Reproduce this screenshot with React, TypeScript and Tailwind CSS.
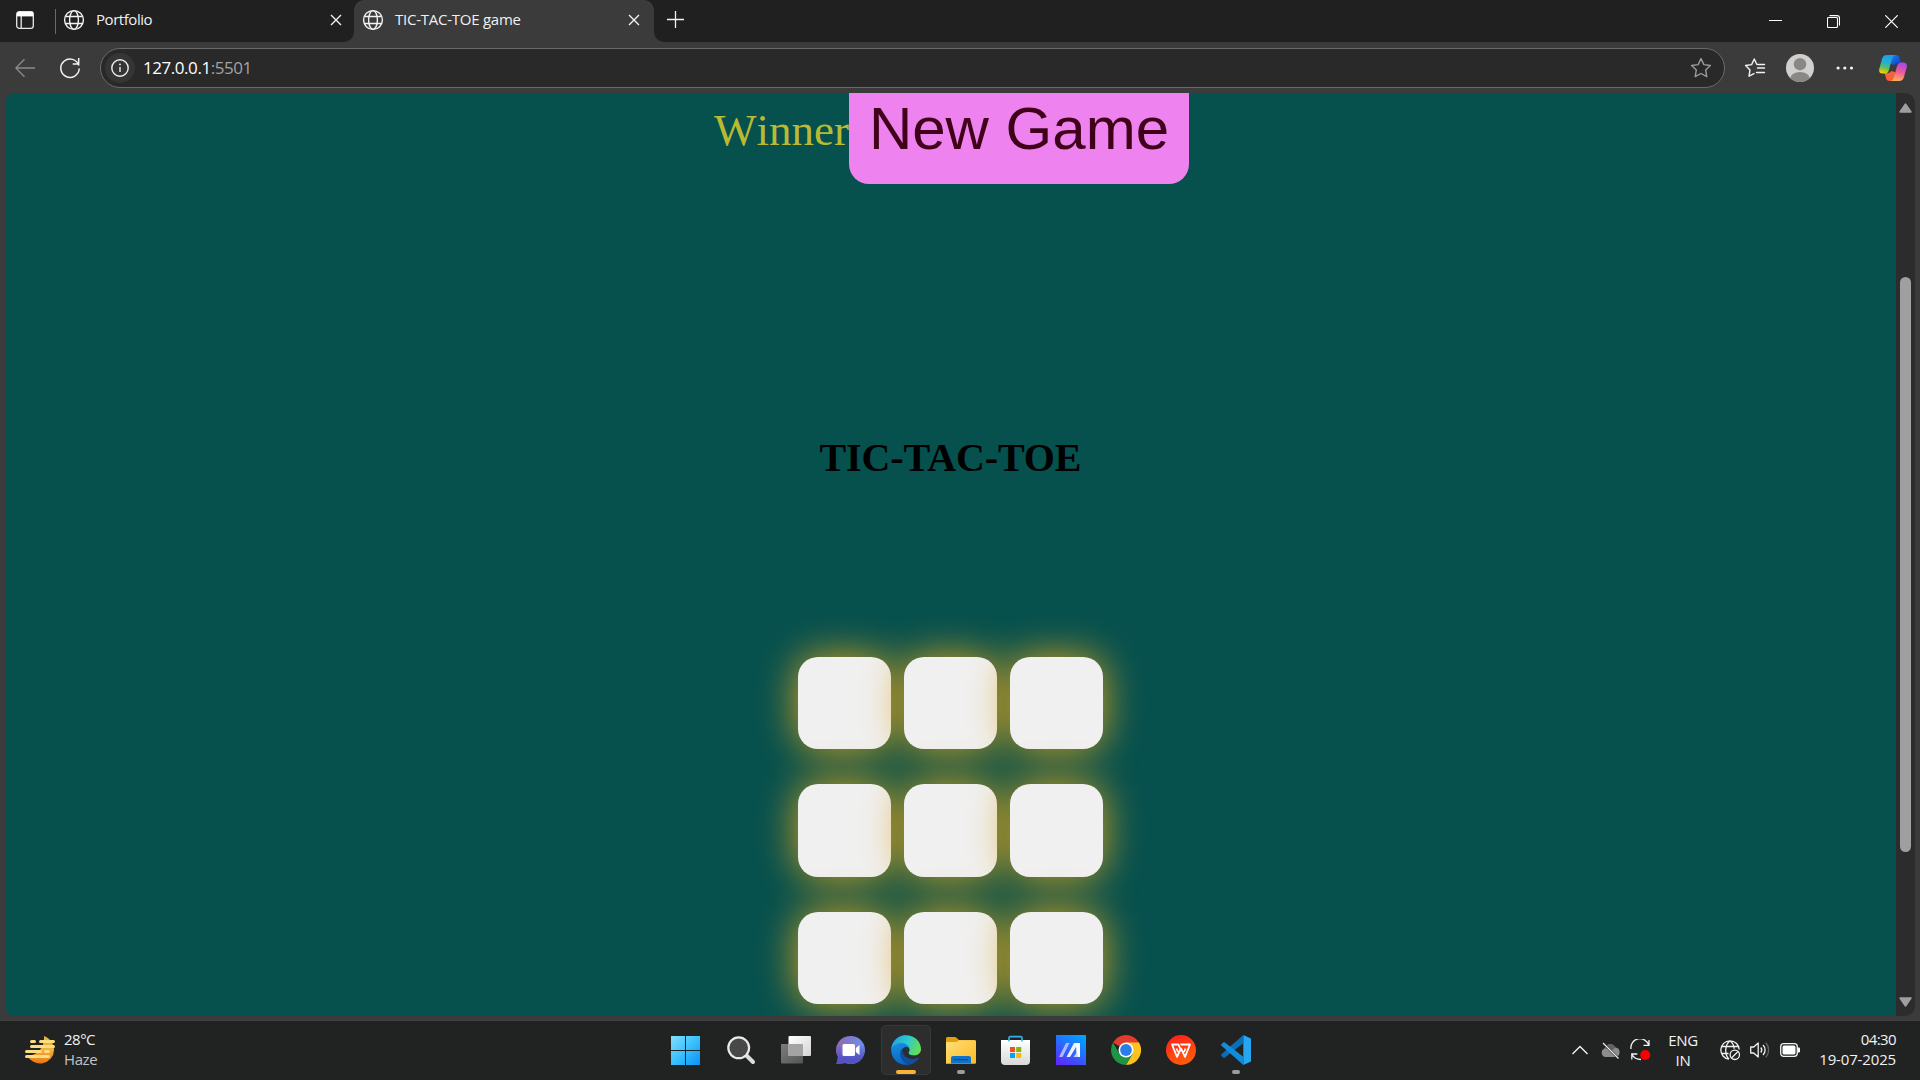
import React from "react";

const Globe = () => (
  <svg width="22" height="22" viewBox="0 0 22 22" fill="none" stroke="#f2f2f2" strokeWidth="1.4">
    <circle cx="11" cy="11" r="9.4" />
    <ellipse cx="11" cy="11" rx="4.4" ry="9.4" />
    <path d="M2.6 7.5h16.8M2.6 14.5h16.8" />
  </svg>
);

const Cross = () => (
  <svg width="12" height="12" viewBox="0 0 12 12" stroke="#f2f2f2" strokeWidth="1.4">
    <path d="M1 1l10 10M11 1L1 11" />
  </svg>
);

function TabStrip() {
  return (
    <div className="flex h-[42px] items-start bg-[#202020]">
      <div className="flex h-10 w-[55px] items-center pl-4">
        <svg width="18" height="18" viewBox="0 0 18 18" fill="none" stroke="#e8e8e8" strokeWidth="1.3">
          <rect x=".7" y=".7" width="16.6" height="16.6" rx="2.6" />
          <path d="M5.2 5v12" />
          <path d="M1 1h16v4.4H1z" fill="#fff" stroke="none" />
        </svg>
      </div>
      <div className="mt-[9px] h-[25px] w-px bg-[#6a6a6a]" />
      <div className="flex h-10 w-[298px] items-center pl-[7px]">
        <Globe />
        <span className="mb-[2px] ml-[11px] w-[234px] text-[15px] tracking-[-0.45px] text-[#f0f0f0]">Portfolio</span>
        <Cross />
      </div>
      <div className="relative flex h-[42px] w-[300px] items-start rounded-t-[10px] bg-[#3b3b3b]">
        <svg className="absolute bottom-0 -left-[10px]" width="10" height="10"><path d="M10 0v10H0A10 10 0 0 0 10 0" fill="#3b3b3b" /></svg>
        <svg className="absolute -right-[10px] bottom-0" width="10" height="10"><path d="M0 0v10h10A10 10 0 0 1 0 0" fill="#3b3b3b" /></svg>
        <div className="flex h-10 items-center pl-[8px]">
          <Globe />
          <span className="mb-[2px] ml-[11px] w-[233px] text-[15px] tracking-[-0.25px] text-[#f0f0f0]">TIC-TAC-TOE game</span>
          <Cross />
        </div>
      </div>
      <svg className="mt-[11px] ml-[13px]" width="18" height="18" viewBox="0 0 18 18" stroke="#f2f2f2" strokeWidth="1.3">
        <path d="M8.5 0v17M0 8.5h17" />
      </svg>
      <div className="mt-[15px] mr-[22px] ml-auto flex items-start gap-[45px]">
        <svg width="13" height="13"><path d="M0 5.5h13" stroke="#fff" /></svg>
        <svg width="13" height="13" viewBox="0 0 13 13" fill="none" stroke="#fff" strokeWidth="1.1">
          <rect x=".5" y="2.5" width="10" height="10" rx="1" />
          <path d="M2.5 .6h7.5a2.5 2.5 0 0 1 2.5 2.5v7.4" />
        </svg>
        <svg width="13" height="13" viewBox="0 0 13 13" stroke="#fff" strokeWidth="1.2"><path d="M.3 .3l12.4 12.4M12.7 .3L.3 12.7" /></svg>
      </div>
    </div>
  );
}

function Toolbar() {
  return (
    <div className="flex h-[51px] items-center bg-[#3b3b3b]">
      <svg className="ml-[15px]" width="20" height="20" viewBox="0 0 20 20" fill="none" stroke="#8c8c8c" strokeWidth="1.3">
        <path d="M20 10H1M9.5 1.2L.8 10l8.7 8.8" />
      </svg>
      <svg className="ml-[25px]" width="20" height="22" viewBox="0 0 20 22" fill="none" stroke="#f2f2f2" strokeWidth="1.5">
        <path d="M18.8 8.5A9.2 9.2 0 1 0 19.2 11.5M18.7 1v6h-6" />
      </svg>
      <div className="mt-[1px] ml-[20px] flex h-10 w-[1625px] items-center rounded-full border border-[#6b6b6b] bg-[#292929]">
        <div className="ml-[4px] flex size-[30px] items-center justify-center rounded-full bg-[#353535]">
          <svg width="18" height="18" viewBox="0 0 18 18" fill="none" stroke="#eee" strokeWidth="1.4">
            <circle cx="9" cy="9" r="8.2" />
            <path d="M9 8v5" />
            <circle cx="9" cy="5.4" r=".9" fill="#eee" stroke="none" />
          </svg>
        </div>
        <span className="mb-px ml-[8px] text-[17px] tracking-[-0.45px] text-white">127.0.0.1<span className="text-[#a2a2a2]">:5501</span></span>
        <svg className="mr-[12px] ml-auto" width="22" height="22" viewBox="0 0 22 22" fill="none" stroke="#9b9b9b" strokeWidth="1.4" strokeLinejoin="round">
          <path d="M11 1.6l2.9 6 6.5.9-4.7 4.6 1.1 6.5-5.8-3.1-5.8 3.1 1.1-6.5L1.6 8.5l6.5-.9z" />
        </svg>
      </div>
      <svg className="ml-[19px]" width="22" height="22" viewBox="0 0 22 22" fill="none" stroke="#f2f2f2" strokeWidth="1.4" strokeLinejoin="round" strokeLinecap="round">
        <path d="M14.5 7.5l-1.8-.3L10.3 2 7.6 7.6l-6 .9 4.4 4.4-1 6.3 5-2.5M13.5 11h7M13.5 7.5h7M12.5 15.5h8" />
      </svg>
      <svg className="ml-[20px]" width="28" height="28" viewBox="0 0 28 28">
        <defs><clipPath id="av"><circle cx="14" cy="14" r="14" /></clipPath></defs>
        <g clipPath="url(#av)">
          <rect width="28" height="28" fill="#d2d0ce" />
          <circle cx="14" cy="10.2" r="6.2" fill="#8a8886" />
          <ellipse cx="14" cy="25" rx="10" ry="7" fill="#8a8886" />
        </g>
      </svg>
      <svg className="ml-[22px]" width="18" height="6" viewBox="0 0 18 6" fill="#f2f2f2">
        <circle cx="2.1" cy="3" r="1.6" /><circle cx="8.8" cy="3" r="1.6" /><circle cx="15.5" cy="3" r="1.6" />
      </svg>
      <svg className="ml-[25px]" width="28" height="26" viewBox="0 0 28 26">
        <defs>
          <linearGradient id="cpa" x1=".5" y1="0" x2=".3" y2="1"><stop stopColor="#1d9bf0" /><stop offset=".45" stopColor="#27b3c6" /><stop offset=".72" stopColor="#6fc04d" /><stop offset="1" stopColor="#ffd400" /></linearGradient>
          <linearGradient id="cpb" x1=".6" y1="0" x2=".4" y2="1"><stop stopColor="#a248f0" /><stop offset=".5" stopColor="#ee5a98" /><stop offset="1" stopColor="#ffb05c" /></linearGradient>
          <linearGradient id="cpc" x1="0" y1="0" x2="1" y2="1"><stop stopColor="#1487f0" /><stop offset="1" stopColor="#1734c4" /></linearGradient>
        </defs>
        <path d="M12 0h5c2 0 3 1.200 3.500 3l1.500 5h-3.500c-1.500 0-2.500.7-3 2L12 9z" fill="url(#cpc)" />
        <path d="M16 26h-5.500c-2 0-3-1.200-3.500-3L5.500 18H9c1.500 0 2.500-.7 3-2l4 1z" fill="#f4623a" />
        <path d="M8 0h8.500c-1.800.3-2.800 1.600-3.400 3.600L10 14.800c-.7 2.500-1.800 3.800-4.200 3.800H3.600C.6 18.600-.4 16.500.3 13.700L3 4C3.800 1.300 5 0 8 0z" fill="url(#cpa)" />
        <path d="M20 26h-8.500c1.800-.3 2.800-1.600 3.400-3.600L18 11.200c.7-2.500 1.800-3.800 4.200-3.800h2.200c3 0 4 2.100 3.300 4.900L25 22c-.8 2.700-2 4-5 4z" fill="url(#cpb)" />
      </svg>
    </div>
  );
}

const cells = Array.from({ length: 9 }, (_, i) => i);

function GamePage() {
  return (
    <main className="relative flex h-[923px] flex-1 flex-col items-center overflow-hidden bg-[#06504e]">
      <div className="flex h-[91px] items-start pl-0.5">
        <p className="mt-[11px] font-['Liberation_Serif',serif] text-[45px] leading-[52px] text-[#baba32] [font-kerning:none]">Winner</p>
        <button className="h-[91px] rounded-b-[20px] bg-[#ee82ee] px-5 pb-[19px] font-['Liberation_Sans',sans-serif] text-[60px] leading-[72px] whitespace-nowrap text-[#40001a]">New Game</button>
      </div>
      <h1 className="mt-[251px] font-['Liberation_Serif',serif] text-[40px] leading-[46px] font-bold tracking-[-0.1px] text-black">TIC-TAC-TOE</h1>
      <div className="mt-[175.6px] grid grid-cols-[93px_93px_93px] gap-x-[13px] gap-y-[35px] pr-px">
        {cells.map((c) => (
          <div key={c} className="h-[92.5px] rounded-[20px] bg-[#f0f0f0] shadow-[0_0_40px_#daa520]" />
        ))}
      </div>
    </main>
  );
}

function Scrollbar() {
  return (
    <div className="flex w-[19px] flex-col items-center bg-[#2c2c2c]">
      <svg className="mt-[10px]" width="13" height="10" viewBox="0 0 13 10"><path d="M6.500 1L12 9H1z" fill="#9f9f9f" stroke="#9f9f9f" strokeWidth="1.500" strokeLinejoin="round" /></svg>
      <div className="mt-[164px] h-[575px] w-[11px] rounded-full bg-[#9f9f9f]" />
      <svg className="mt-auto mb-[9px]" width="13" height="10" viewBox="0 0 13 10"><path d="M6.500 9L12 1H1z" fill="#9f9f9f" stroke="#9f9f9f" strokeWidth="1.500" strokeLinejoin="round" /></svg>
    </div>
  );
}

const Art = ({ children }: { children: React.ReactNode }) => (
  <svg width="30" height="30" viewBox="0 0 30 30">{children}</svg>
);

const icons: { id: string; active?: boolean; running?: boolean; art: React.ReactNode }[] = [
  {
    id: "start",
    art: (
      <Art>
        <defs><linearGradient id="win" x1="0" y1="0" x2="29" y2="29" gradientUnits="userSpaceOnUse"><stop stopColor="#86e0ff" /><stop offset=".5" stopColor="#3cc2fc" /><stop offset="1" stopColor="#0a93f8" /></linearGradient></defs>
        <path d="M0 1h14v14H0zM15 1h14v14H15zM0 16h14v14H0zM15 16h14v14H15z" fill="url(#win)" />
      </Art>
    ),
  },
  {
    id: "search",
    art: (
      <Art>
        <path d="M20.500 20.500l6.500 6.500" stroke="#d9dce0" strokeWidth="4" strokeLinecap="round" />
        <circle cx="12.700" cy="12.800" r="10.400" fill="#484848" stroke="#e9e9e9" strokeWidth="2.200" />
      </Art>
    ),
  },
  {
    id: "taskview",
    art: (
      <Art>
        <defs>
          <linearGradient id="tv1" x1="0" y1="0" x2="1" y2="1"><stop stopColor="#fff" /><stop offset="1" stopColor="#d4d4d4" /></linearGradient>
          <linearGradient id="tv2" x1="0" y1="0" x2="1" y2="1"><stop stopColor="#7c7c7c" /><stop offset="1" stopColor="#555" /></linearGradient>
        </defs>
        <rect x="0" y="9" width="22" height="19.500" rx="1" fill="url(#tv2)" />
        <rect x="7.500" y="1" width="22.500" height="20" rx="1" fill="url(#tv1)" />
        <path d="M7.500 9H21a1 1 0 0 1 1 1v11H8.500a1 1 0 0 1-1-1z" fill="#a3a3a3" />
      </Art>
    ),
  },
  {
    id: "chat",
    art: (
      <Art>
        <defs><linearGradient id="chat" x1="0" y1=".2" x2=".9" y2=".3"><stop stopColor="#9468a8" /><stop offset=".45" stopColor="#8078cc" /><stop offset="1" stopColor="#6f8ce8" /></linearGradient>
          <linearGradient id="chat2" x1="0" y1="0" x2="0" y2="1"><stop offset=".3" stopColor="#5352c4" stopOpacity="0" /><stop offset=".8" stopColor="#5453c6" /></linearGradient></defs>
        <path d="M14.700 1a14.200 14 0 1 1-5.200 27L.5 29l1.500-7A14.200 14 0 0 1 14.700 1z" fill="url(#chat)" />
        <path d="M14.700 1a14.200 14 0 1 1-5.200 27L.5 29l1.500-7A14.200 14 0 0 1 14.700 1z" fill="url(#chat2)" />
        <rect x="6.500" y="9" width="12.500" height="12" rx="1.500" fill="#fff" />
        <path d="M19.800 13l3.700-3v10l-3.700-3z" fill="#fff" />
      </Art>
    ),
  },
  {
    id: "edge",
    active: true,
    art: (
      <Art>
        <defs>
          <linearGradient id="eg1" x1="0" y1=".3" x2="1" y2=".6"><stop stopColor="#259fe0" /><stop offset=".5" stopColor="#2ec9cf" /><stop offset="1" stopColor="#69e04c" /></linearGradient>
          <linearGradient id="eg2" x1="0" y1="0" x2=".4" y2="1"><stop stopColor="#1aa0e6" /><stop offset="1" stopColor="#0b62c4" /></linearGradient>
        </defs>
        <path d="M15 .2A14.800 14.800 0 1 0 27.800 22.400L26 15z" fill="url(#eg2)" />
        <path d="M.3 14C1.500 5 8 .2 15 .2 24 .2 30 7 30 14c0 4-3 6.500-7 6.500-3.500 0-5.500-1.200-5.500-2.500 0-1 1-1.500 1-3.500C18.500 11 15 8 10.500 8 6 8 2 10.500.3 14z" fill="url(#eg1)" />
        <path d="M12.500 12.500c-3 2-4 5-3 9 1 4 4.500 7.500 9 8 4-1 7.500-3.500 9.300-7-7 3.500-14.800.5-15.800-5-.3-2 0-3.500.5-5z" fill="#0f4f9e" />
        <path d="M14 12c-3 1.500-3 5-1.500 7.500 2.500 4.500 10 6 15 3l1.500-3.800c-2 1.800-7.500 2.500-10 1.100-1-.6-1.500-1.300-1.500-1.900 0-1 1-1.500 1-3.400 0-1.500-1.500-3-4.500-2.500z" fill="#2b2e30" />
      </Art>
    ),
  },
  {
    id: "files",
    running: true,
    art: (
      <Art>
        <defs><linearGradient id="fold" x1="0" y1="0" x2="1" y2="1"><stop stopColor="#ffe07a" /><stop offset="1" stopColor="#fdb924" /></linearGradient></defs>
        <path d="M0 3.500C0 2.600.6 2 1.500 2h8L13 5h15.500L30 8v6H0z" fill="#e0a106" />
        <path d="M0 7h10.500L13 5.200h15.800c.8 0 1.200.5 1.200 1.300v21c0 .8-.5 1.200-1.200 1.200H0z" fill="url(#fold)" />
        <path d="M5 28.500V23a2 2 0 0 1 2-2h16a2 2 0 0 1 2 2v5.500z" fill="#0f73cc" />
        <path d="M8.500 24.700h13" stroke="#0a4d92" strokeWidth="1.300" strokeLinecap="round" />
      </Art>
    ),
  },
  {
    id: "store",
    art: (
      <Art>
        <defs><linearGradient id="bag" x1="0" y1="0" x2="0" y2="1"><stop stopColor="#fff" /><stop offset="1" stopColor="#d9d9d9" /></linearGradient></defs>
        <path d="M0 5h29v21a4 4 0 0 1-4 4H4a4 4 0 0 1-4-4z" fill="url(#bag)" />
        <path d="M8 6.500V2.800C8 2 8.400 1.600 9.200 1.600h10.600c.8 0 1.200.4 1.200 1.200v3.700" fill="none" stroke="#32b4e8" strokeWidth="1.600" />
        <path d="M9 12h5v5H9z" fill="#f25022" /><path d="M15.200 12h5v5h-5z" fill="#7fba00" />
        <path d="M9 18h5v5H9z" fill="#00a4ef" /><path d="M15.200 18h5v5h-5z" fill="#ffb900" />
      </Art>
    ),
  },
  {
    id: "asus",
    art: (
      <Art>
        <defs><linearGradient id="asus" x1=".2" y1="1" x2=".8" y2="0"><stop stopColor="#5a2bfc" /><stop offset=".5" stopColor="#2a68ff" /><stop offset="1" stopColor="#00a2ff" /></linearGradient></defs>
        <rect width="30" height="30" fill="url(#asus)" />
        <path d="M3 22L10 8h3.500l-7 14z" fill="#a9bcff" />
        <path d="M10.500 22l7.500-14h4.500L14 22z" fill="#eef1ff" />
        <path d="M20 8h4v14h-3.500z" fill="#fff" />
        <path d="M17.500 22l3.500-5 1 5z" fill="#c6d2ff" />
      </Art>
    ),
  },
  {
    id: "chrome",
    art: (
      <Art>
        <path d="M15 15L2.010 7.500A15 15 0 0 1 27.990 7.500z" fill="#e33b2e" />
        <path d="M15 7.500h13A15 15 0 0 1 15 30l6.500-11.250z" fill="#fcc31e" />
        <path d="M2.010 7.500A15 15 0 0 0 15 30l6.500-11.250L15 15 8.500 18.750z" fill="#1f9445" />
        <circle cx="15" cy="15" r="7.500" fill="#fff" /><circle cx="15" cy="15" r="5.900" fill="#2a7de9" />
      </Art>
    ),
  },
  {
    id: "wps",
    art: (
      <Art>
        <defs><linearGradient id="wps" x1="0" y1="0" x2=".4" y2="1"><stop stopColor="#ff1b1b" /><stop offset="1" stopColor="#ff5a0c" /></linearGradient></defs>
        <circle cx="15" cy="15" r="15" fill="url(#wps)" />
        <path d="M14.500 14.500L12.500 9.500H6l5 12.300 4-8.300 4 8.300 5-12.300h-9.500M10.500 13.500l1.500 3.500M19.500 13.500L18 17" fill="none" stroke="#fff" strokeWidth="1.800" strokeLinejoin="round" />
      </Art>
    ),
  },
  {
    id: "code",
    running: true,
    art: (
      <Art>
        <path d="M22.300 0L30 3.500v23L22.300 30z" fill="#27a6f0" />
        <path d="M22.300 0v8.300L4 22.500c-.7.500-1.300.5-1.800 0L.5 21c-.6-.6-.6-1.200 0-1.800z" fill="#0b6fb8" />
        <path d="M22.300 30v-8.300L4 7.500c-.7-.5-1.300-.5-1.800 0L.5 9c-.6.600-.6 1.200 0 1.800z" fill="#138bd6" />
      </Art>
    ),
  },
];

function Taskbar() {
  return (
    <div className="flex h-[60px] items-start border-t border-[#404040] bg-[#212222] text-[15px] leading-[20px] text-[#f2f2f2]">
      <div className="flex w-[661px] pt-[8px] pl-[25px]">
        <svg className="mt-[6px]" width="30" height="29" viewBox="0 0 30 29">
          <defs><linearGradient id="moon" x1="0" y1="0" x2="0" y2="1"><stop stopColor="#e4b43c" /><stop offset=".5" stopColor="#f5b13a" /><stop offset="1" stopColor="#ea7614" /></linearGradient></defs>
          <path d="M19 1c6 2.500 10 7.500 10 14a14 13.500 0 0 1-27 5c8 2 18-6 17-19z" fill="url(#moon)" />
          <path d="M6.500 6.500h3M15.500 6.500h13M6.500 11.500h22M1.500 16.500h14M20.500 16.500h3M1.500 21.500h22" stroke="#fbdc80" strokeWidth="3" strokeLinecap="round" />
        </svg>
        <div className="ml-[9px]">
          <p className="tracking-[-0.5px]">28°C</p>
          <p className="tracking-[-0.4px] text-[#c2c2c2]">Haze</p>
        </div>
      </div>
      <div className="mt-[4px] flex gap-[5px]">
        {icons.map((i) => (
          <div key={i.id} className={i.active ? "flex size-[50px] flex-col items-center rounded-[5px] bg-[#2d2d2d] pt-[10px] outline outline-1 -outline-offset-1 outline-[#383838]" : "flex size-[50px] flex-col items-center pt-[10px]"}>
            {i.art}
            {i.active && <div className="mt-[5px] h-[4px] w-5 rounded-full bg-[#fbb335]" />}
            {i.running && <div className="mt-[5px] h-[4px] w-2 rounded-full bg-[#9c9c9c]" />}
          </div>
        ))}
      </div>
      <div className="ml-auto flex h-full items-start pr-[24px]">
        <div className="mt-[18px] flex items-center">
          <svg width="16" height="22" viewBox="0 0 16 22" fill="none" stroke="#f2f2f2" strokeWidth="1.400"><path d="M.5 15L8 7.500l7.500 7.500" /></svg>
          <svg className="ml-[12px]" width="20" height="22" viewBox="0 0 20 22">
            <path d="M5 18a4.500 4.500 0 0 1-.5-8.500A6 6 0 0 1 15.500 8.500 4.800 4.800 0 0 1 15.500 18z" fill="#8d8d8d" />
            <path d="M4.500 9.500A6 6 0 0 1 15.500 8.500l-3 2.500z" fill="#626262" />
            <path d="M4 5L19 20" stroke="#212222" strokeWidth="2.400" /><path d="M3 4L18.500 19.500" stroke="#eee" strokeWidth="1.300" />
          </svg>
          <svg className="ml-[10px]" width="21" height="22" viewBox="0 0 21 22" fill="none" stroke="#f2f2f2" strokeWidth="1.300">
            <path d="M1 10A9 9 0 0 1 18.500 6M19 1v5.300h-5.500M1.800 20.500V15h5.500M2 15.500c2 4 5 5 9 5" />
            <circle cx="15.300" cy="16" r="5" fill="#f90000" stroke="none" />
          </svg>
        </div>
        <div className="mt-[9px] ml-[13px] w-[38px] text-center text-[15px]">
          <p className="tracking-[-0.3px]">ENG</p><p className="tracking-[-0.3px]">IN</p>
        </div>
        <div className="mt-[18px] ml-[18px] flex items-center">
          <svg width="20" height="22" viewBox="0 0 20 22" fill="none" stroke="#f2f2f2" strokeWidth="1.300">
            <path d="M9 20.200A9.200 9.200 0 1 1 19.200 10.500M9 20C4.500 16 4.500 6 10 1.800c3 2.300 4 5.200 4.200 8M1.500 7.500h17M1.500 14.500h7" />
            <circle cx="14.800" cy="15.800" r="4.700" /><path d="M11.500 19l6.500-6.500" />
          </svg>
          <svg className="ml-[10px]" width="20" height="22" viewBox="0 0 20 22" fill="none" stroke="#f2f2f2" strokeWidth="1.300" strokeLinejoin="round">
            <path d="M.7 8h3l4.500-4v14l-4.500-4h-3zM10.800 8.500a4 4 0 0 1 0 5M13 6a7 7 0 0 1 0 10" />
            <path d="M15.800 3.800a10.500 10.500 0 0 1 0 14.400" stroke="#666" />
          </svg>
          <svg className="ml-[10px]" width="21" height="22" viewBox="0 0 21 22">
            <rect x=".7" y="4.700" width="16.600" height="12.600" rx="3" fill="none" stroke="#f2f2f2" strokeWidth="1.300" />
            <rect x="2.500" y="6.500" width="13" height="9" rx="1.500" fill="#fff" /><path d="M18 8.500h1a1 1 0 0 1 1 1v3a1 1 0 0 1-1 1h-1z" fill="#fff" />
          </svg>
        </div>
        <div className="mt-[8px] w-[95px] text-right">
          <p className="tracking-[-0.6px]">04:30</p>
          <p className="tracking-[-0.15px]">19-07-2025</p>
        </div>
      </div>
    </div>
  );
}

export default function App() {
  return (
    <div className="h-[1080px] w-[1920px] overflow-hidden bg-[#3b3b3b] font-['Open_Sans',sans-serif]">
      <TabStrip />
      <Toolbar />
      <div className="mx-[5px] mb-[4px] flex h-[923px] overflow-hidden rounded-[10px]">
        <GamePage />
        <Scrollbar />
      </div>
      <Taskbar />
    </div>
  );
}
